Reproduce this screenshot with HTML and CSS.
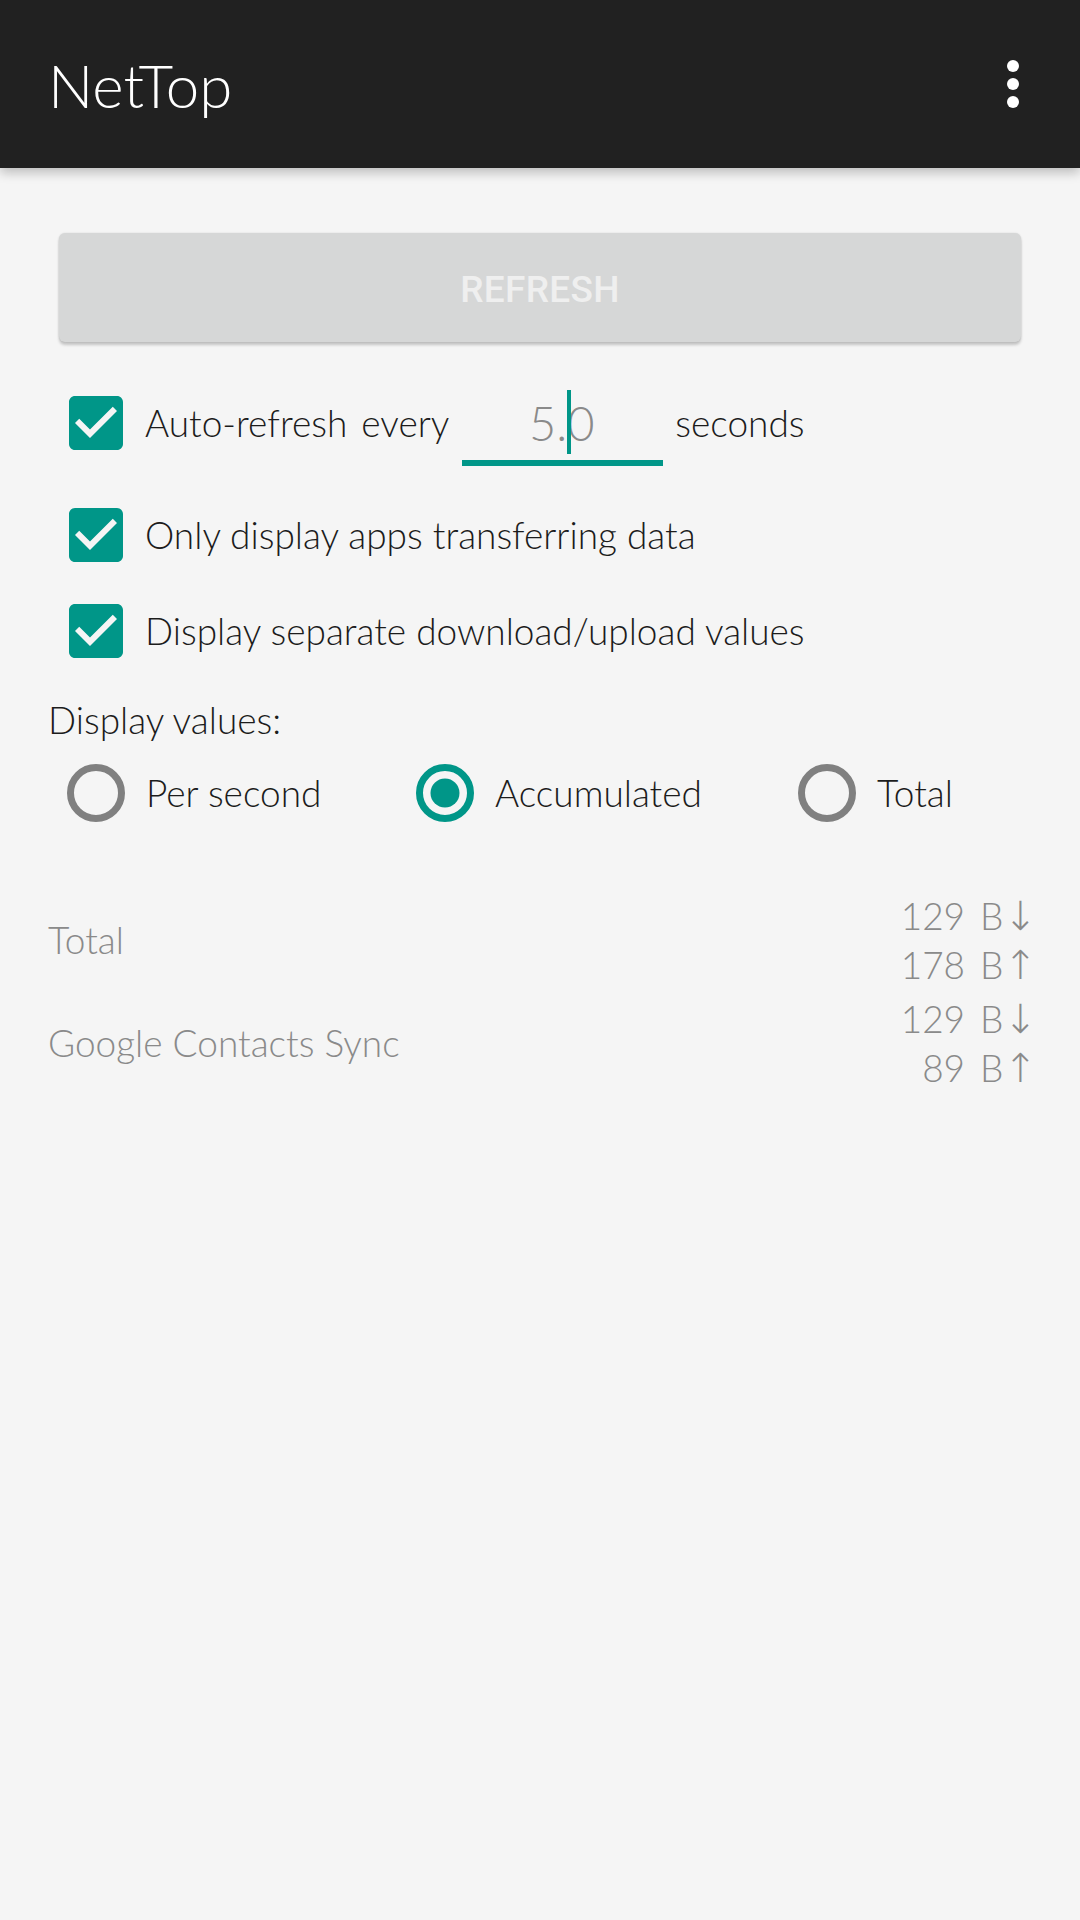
FILE: index.html
```
<!DOCTYPE html>
<html lang="en">
<head>
<meta charset="utf-8">
<title>NetTop</title>
<link rel="stylesheet" href="styles.css">
</head>
<body>
<header class="appbar">
  <h1 class="title">NetTop</h1>
  <div class="overflow" aria-label="More options"><span class="dot"></span><span class="dot"></span><span class="dot"></span></div>
</header>
<main class="content">
  <button class="refresh" type="button">REFRESH</button>

  <div class="opt-row row-auto">
    <svg class="check" viewBox="3 3 18 18" width="54" height="54"><path fill="#009688" d="M19 3H5c-1.11 0-2 .9-2 2v14c0 1.1.89 2 2 2h14c1.11 0 2-.9 2-2V5c0-1.1-.89-2-2-2zm-9 14l-5-5 1.41-1.41L10 14.17l7.59-7.59L19 8l-9 9z"/></svg>
    <span class="label">Auto-refresh</span>
    <span class="label every">every</span>
    <div class="edit"><span class="edit-text">5.0</span><span class="cursor"></span></div>
    <span class="label">seconds</span>
  </div>

  <div class="opt-row row-only">
    <svg class="check" viewBox="3 3 18 18" width="54" height="54"><path fill="#009688" d="M19 3H5c-1.11 0-2 .9-2 2v14c0 1.1.89 2 2 2h14c1.11 0 2-.9 2-2V5c0-1.1-.89-2-2-2zm-9 14l-5-5 1.41-1.41L10 14.17l7.59-7.59L19 8l-9 9z"/></svg>
    <span class="label">Only display apps transferring data</span>
  </div>

  <div class="opt-row row-sep">
    <svg class="check" viewBox="3 3 18 18" width="54" height="54"><path fill="#009688" d="M19 3H5c-1.11 0-2 .9-2 2v14c0 1.1.89 2 2 2h14c1.11 0 2-.9 2-2V5c0-1.1-.89-2-2-2zm-9 14l-5-5 1.41-1.41L10 14.17l7.59-7.59L19 8l-9 9z"/></svg>
    <span class="label">Display separate download/upload values</span>
  </div>

  <div class="section-label">Display values:</div>

  <div class="radios">
    <div class="radio">
      <svg class="radio-icon" viewBox="0 0 58 58" width="58" height="58"><circle cx="29" cy="29" r="25.5" fill="none" stroke="#808080" stroke-width="7"/></svg>
      <span class="label">Per second</span>
    </div>
    <div class="radio">
      <svg class="radio-icon" viewBox="0 0 58 58" width="58" height="58"><circle cx="29" cy="29" r="25.5" fill="none" stroke="#009688" stroke-width="7"/><circle cx="29" cy="29" r="14.5" fill="#009688"/></svg>
      <span class="label">Accumulated</span>
    </div>
    <div class="radio">
      <svg class="radio-icon" viewBox="0 0 58 58" width="58" height="58"><circle cx="29" cy="29" r="25.5" fill="none" stroke="#808080" stroke-width="7"/></svg>
      <span class="label">Total</span>
    </div>
  </div>

  <div class="list">
    <div class="list-row">
      <div class="app-name">Total</div>
      <div class="vals">
        <div class="val">129 B<span class="arrow">↓</span></div>
        <div class="val">178 B<span class="arrow">↑</span></div>
      </div>
    </div>
    <div class="list-row">
      <div class="app-name">Google Contacts Sync</div>
      <div class="vals">
        <div class="val">129 B<span class="arrow">↓</span></div>
        <div class="val">89 B<span class="arrow">↑</span></div>
      </div>
    </div>
  </div>
</main>
</body>
</html>
```

FILE: styles.css
```
* {
  box-sizing: border-box;
}

html, body {
  margin: 0;
  padding: 0;
}

body {
  width: 1080px;
  height: 1920px;
  background: #f5f5f5;
  font-family: "Lato", "Roboto", "Noto Sans", sans-serif;
  font-weight: 300;
  color: #1c1c1c;
  overflow: hidden;
}

.appbar {
  height: 168px;
  background: #212121;
  display: flex;
  align-items: center;
  justify-content: space-between;
  padding: 0 60px 0 48px;
  box-shadow: 0 5px 10px rgba(0, 0, 0, 0.22);
  position: relative;
  z-index: 1;
}

.title {
  margin: 0;
  font-family: "Lato", sans-serif;
  font-weight: 300;
  font-size: 60px;
  line-height: 72px;
  color: #ffffff;
  padding-top: 1px;
}

.overflow {
  display: flex;
  flex-direction: column;
  align-items: center;
  gap: 6px;
  width: 14px;
}

.dot {
  width: 12px;
  height: 12px;
  border-radius: 50%;
  background: #ffffff;
}

.content {
  padding: 0 48px;
  display: flex;
  flex-direction: column;
}

.refresh {
  margin: 65px 11px 0;
  height: 109px;
  border: none;
  border-radius: 6px;
  background: #d6d7d7;
  color: #efefef;
  font-family: "Roboto", sans-serif;
  font-weight: 500;
  font-size: 37px;
  letter-spacing: 0.3px;
  box-shadow: 0 3px 3px rgba(0, 0, 0, 0.2), 0 0 2px rgba(0, 0, 0, 0.12);
  padding: 4px 0 0;
}

.opt-row {
  display: flex;
  align-items: center;
  padding-left: 21px;
}

.row-auto {
  margin-top: 25px;
  height: 112px;
}

.row-only {
  height: 112px;
}

.row-sep {
  height: 80px;
}

.check {
  flex: none;
  display: block;
  margin-right: 22px;
}

.label {
  font-size: 37px;
  line-height: 44px;
  white-space: nowrap;
}

.every {
  margin-left: 14px;
}

.edit {
  position: relative;
  width: 201px;
  height: 76px;
  margin: 10px 12px 0 13px;
  border-bottom: 6px solid #009688;
  padding-top: 3px;
  text-align: center;
}

.edit-text {
  display: block;
  font-size: 47px;
  line-height: 60px;
  color: #8a8a8a;
  padding-right: 2px;
}

.cursor {
  position: absolute;
  left: 105px;
  top: 0;
  width: 4px;
  height: 64px;
  background: #009688;
}

.section-label {
  margin-top: 27px;
  font-size: 37px;
  line-height: 44px;
}

.radios {
  display: grid;
  grid-template-columns: 349px 382px auto;
  margin-top: 21px;
  padding-left: 19px;
}

.radio {
  display: flex;
  align-items: center;
  height: 60px;
}

.radio-icon {
  display: block;
  flex: none;
  margin-right: 21px;
}

.list {
  margin-top: 66px;
  padding-right: 1px;
}

.list-row {
  display: flex;
  align-items: center;
  justify-content: space-between;
  padding: 2px 0 3px;
}

.app-name {
  font-size: 37px;
  line-height: 44px;
  color: #8a8a8a;
}

.vals {
  text-align: right;
}

.val {
  font-size: 37px;
  line-height: 49px;
  color: #8a8a8a;
  word-spacing: 5px;
}

.arrow {
  display: inline-block;
  font-family: "DejaVu Sans", sans-serif;
  font-weight: 200;
  font-size: 40px;
  line-height: 0;
  margin-right: -6px;
}
```
